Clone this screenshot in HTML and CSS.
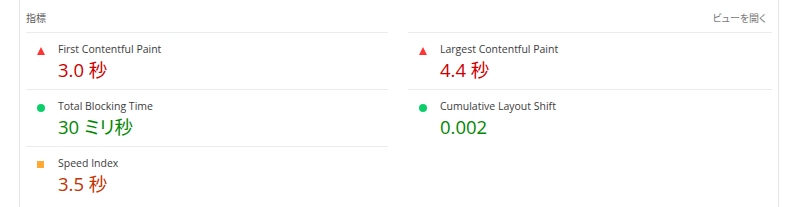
FILE: index.html
```html
<!DOCTYPE html>
<html lang="ja">
<head>
<meta charset="utf-8">
<title>指標</title>
<link rel="stylesheet" href="styles.css">
</head>
<body>
<section class="card">
  <header class="card-header">
    <span class="title">指標</span>
    <span class="toggle">ビューを開く</span>
  </header>
  <div class="metrics">
    <div class="metric">
      <span class="icon tri"></span>
      <div class="text">
        <div class="label">First Contentful Paint</div>
        <div class="value fail">3.0 秒</div>
      </div>
    </div>
    <div class="metric">
      <span class="icon tri"></span>
      <div class="text">
        <div class="label">Largest Contentful Paint</div>
        <div class="value fail">4.4 秒</div>
      </div>
    </div>
    <div class="metric">
      <span class="icon dot"></span>
      <div class="text">
        <div class="label">Total Blocking Time</div>
        <div class="value pass">30 ミリ秒</div>
      </div>
    </div>
    <div class="metric">
      <span class="icon dot"></span>
      <div class="text">
        <div class="label">Cumulative Layout Shift</div>
        <div class="value pass">0.002</div>
      </div>
    </div>
    <div class="metric">
      <span class="icon sq"></span>
      <div class="text">
        <div class="label">Speed Index</div>
        <div class="value average">3.5 秒</div>
      </div>
    </div>
  </div>
</section>
</body>
</html>
```
FILE: styles.css
```css
html, body {
  margin: 0;
  padding: 0;
  background: #ffffff;
}
body {
  font-family: "Open Sans", "Noto Sans CJK JP", sans-serif;
  color: #3a3a3a;
  height: 207px;
  overflow: hidden;
}
.card {
  margin-left: 19px;
  width: 760px;
  border-left: 1px solid #e6e6e6;
  border-right: 1px solid #e6e6e6;
  padding: 0 6px;
  box-sizing: border-box;
  height: 207px;
  overflow: hidden;
}
.card-header {
  display: flex;
  justify-content: space-between;
  align-items: center;
  height: 32px;
  padding-top: 3px;
  box-sizing: border-box;
  font-family: "Noto Sans CJK JP", sans-serif;
  font-size: 10px;
  font-feature-settings: "palt";
}
.title {
  color: #5a5a5a;
}
.toggle {
  color: #7a7a7a;
  padding-right: 6px;
}
.metrics {
  display: grid;
  grid-template-columns: 362px 1fr;
  column-gap: 20px;
}
.metric {
  display: flex;
  border-top: 1px solid #ebebeb;
  height: 57px;
  box-sizing: border-box;
  padding-top: 9px;
}
.icon {
  flex: none;
  margin-left: 11px;
  margin-right: 13px;
  width: 8px;
  height: 8px;
  margin-top: 5px;
}
.icon.tri {
  width: 0;
  height: 0;
  border-left: 4px solid transparent;
  border-right: 4px solid transparent;
  border-bottom: 8px solid #ff3333;
  margin-top: 5px;
}
.icon.dot {
  border-radius: 50%;
  background: #0cce6b;
}
.icon.sq {
  width: 7px;
  height: 7px;
  margin-left: 11px;
  margin-right: 14px;
  background: #ffa833;
}
.label {
  font-size: 10.5px;
  line-height: 15px;
  color: #3c3c3c;
}
.value {
  font-family: "Open Sans", "Noto Sans CJK JP", sans-serif;
  font-weight: 400;
  font-size: 18.5px;
  line-height: 24px;
  margin-top: 1px;
  font-feature-settings: "palt";
}
.value.fail {
  color: #cc0000;
}
.value.pass {
  color: #008800;
}
.value.average {
  color: #c33300;
}
```
